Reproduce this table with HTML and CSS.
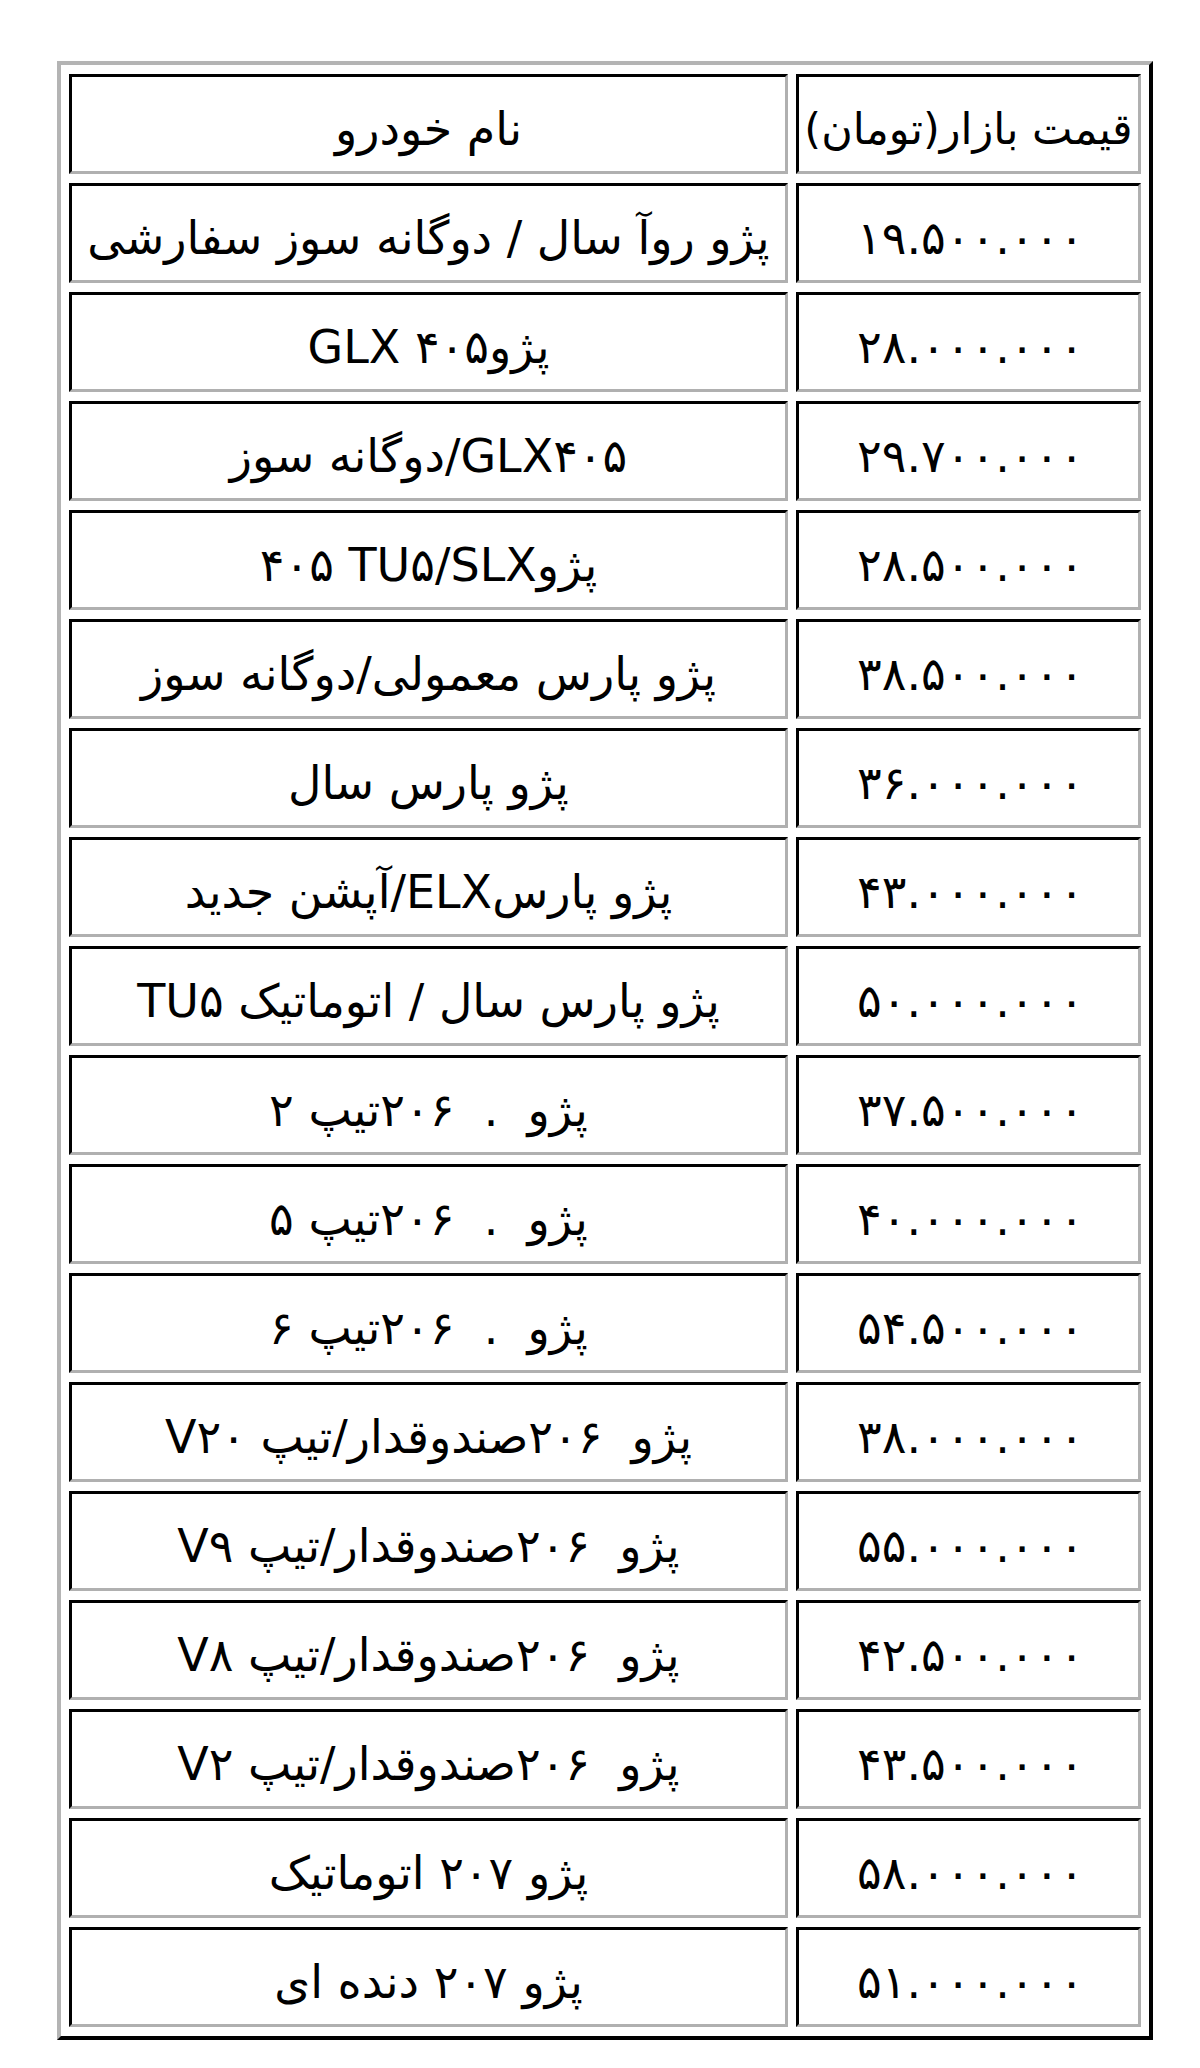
FILE: index.html
```html
<!DOCTYPE html>
<html lang="fa">
<head>
<meta charset="utf-8">
<title>قیمت بازار خودرو</title>
<link rel="stylesheet" href="styles.css">
</head>
<body>
<table class="prices" dir="rtl">
  <colgroup>
    <col class="col-price">
    <col class="col-name">
  </colgroup>
  <tr>
    <td class="head-price">قیمت بازار(تومان)</td>
    <td class="name">نام خودرو</td>
  </tr>
  <tr><td class="price">۱۹.۵۰۰.۰۰۰</td><td class="name">پژو روآ سال / دوگانه سوز سفارشی</td></tr>
  <tr><td class="price">۲۸.۰۰۰.۰۰۰</td><td class="name">پژو۴۰۵ GLX</td></tr>
  <tr><td class="price">۲۹.۷۰۰.۰۰۰</td><td class="name">GLX۴۰۵/دوگانه سوز</td></tr>
  <tr><td class="price">۲۸.۵۰۰.۰۰۰</td><td class="name">پژوSLX&rlm;/TU۵&rlm; ۴۰۵</td></tr>
  <tr><td class="price">۳۸.۵۰۰.۰۰۰</td><td class="name">پژو پارس معمولی/دوگانه سوز</td></tr>
  <tr><td class="price">۳۶.۰۰۰.۰۰۰</td><td class="name">پژو پارس سال</td></tr>
  <tr><td class="price">۴۳.۰۰۰.۰۰۰</td><td class="name">پژو پارسELX/آپشن جدید</td></tr>
  <tr><td class="price">۵۰.۰۰۰.۰۰۰</td><td class="name">پژو پارس سال / اتوماتیک TU۵</td></tr>
  <tr><td class="price">۳۷.۵۰۰.۰۰۰</td><td class="name">پژو&nbsp; .&nbsp; ۲۰۶تیپ ۲</td></tr>
  <tr><td class="price">۴۰.۰۰۰.۰۰۰</td><td class="name">پژو&nbsp; .&nbsp; ۲۰۶تیپ ۵</td></tr>
  <tr><td class="price">۵۴.۵۰۰.۰۰۰</td><td class="name">پژو&nbsp; .&nbsp; ۲۰۶تیپ ۶</td></tr>
  <tr><td class="price">۳۸.۰۰۰.۰۰۰</td><td class="name">پژو&nbsp; ۲۰۶صندوقدار/تیپ V۲۰</td></tr>
  <tr><td class="price">۵۵.۰۰۰.۰۰۰</td><td class="name">پژو&nbsp; ۲۰۶صندوقدار/تیپ V۹</td></tr>
  <tr><td class="price">۴۲.۵۰۰.۰۰۰</td><td class="name">پژو&nbsp; ۲۰۶صندوقدار/تیپ V۸</td></tr>
  <tr><td class="price">۴۳.۵۰۰.۰۰۰</td><td class="name">پژو&nbsp; ۲۰۶صندوقدار/تیپ V۲</td></tr>
  <tr><td class="price">۵۸.۰۰۰.۰۰۰</td><td class="name">پژو ۲۰۷ اتوماتیک</td></tr>
  <tr><td class="price">۵۱.۰۰۰.۰۰۰</td><td class="name">پژو ۲۰۷ دنده ای</td></tr>
</table>
</body>
</html>
```

FILE: styles.css
```css
html, body {
  margin: 0;
  padding: 0;
  background: #ffffff;
}

body {
  font-family: "DejaVu Sans", "Noto Sans", sans-serif;
  color: #000000;
}

.prices {
  margin: 61px 0 0 57px;
  width: 1096px;
  table-layout: fixed;
  border-collapse: separate;
  border-spacing: 8px 9px;
  border-style: solid;
  border-width: 4px;
  border-color: #b4b4b4 #000000 #000000 #b4b4b4;
}

.col-price {
  width: 345px;
}

.col-name {
  width: 719px;
}

.prices td {
  box-sizing: border-box;
  height: 100px;
  padding: 12px 0 0 0;
  border-style: solid;
  border-width: 3px;
  border-color: #000000 #b0b0b0 #b0b0b0 #000000;
  text-align: center;
  vertical-align: middle;
  white-space: nowrap;
  overflow: hidden;
  font-size: 46px;
  line-height: 1.2;
}

.prices td.price {
  letter-spacing: 4px;
  padding-left: 4px;
}

.prices td.head-price {
  font-size: 43px;
}
```
